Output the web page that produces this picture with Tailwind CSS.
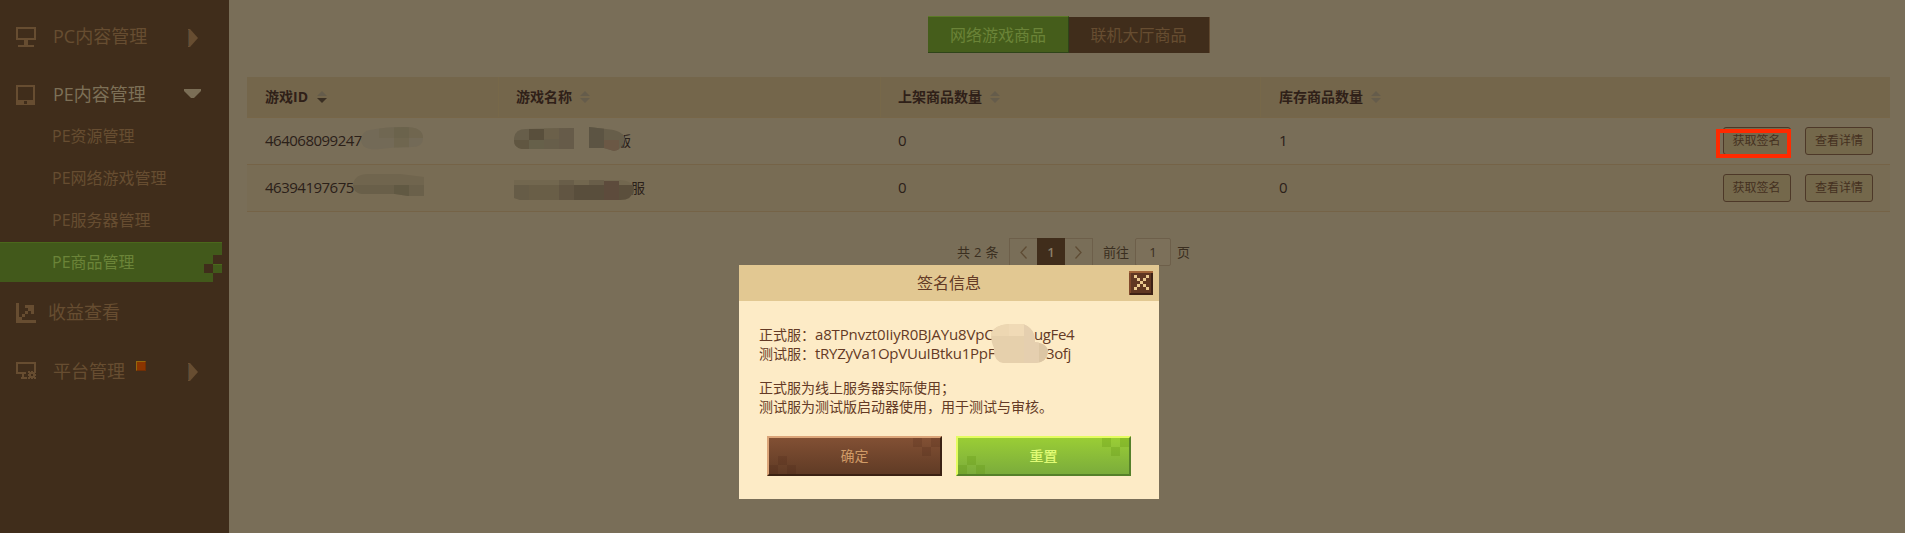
<!DOCTYPE html>
<html lang="zh">
<head>
<meta charset="utf-8">
<title>PE商品管理</title>
<script src="https://cdn.jsdelivr.net/npm/@tailwindcss/browser@4"></script>
</head>
<body class="relative flex h-[533px] w-[1905px] overflow-hidden bg-[#796e58] font-['Open_Sans','Noto_Sans_CJK_SC',sans-serif] text-sm text-[#2b2019]">
<aside class="flex h-full w-[229px] shrink-0 flex-col bg-[#402d1b] pt-[7px] text-lg text-[#674d31]">
  <div class="flex h-[58px] items-center pl-4">
    <svg class="mt-0.5 h-5 w-5 fill-current" viewBox="0 0 20 20" shape-rendering="crispEdges"><path fill-rule="evenodd" d="M0 0H20V13H12V18H18V20H2V18H8V13H0ZM2 2V11H18V2Z"/></svg>
    <span class="ml-[17px] w-[135px]">PC内容管理</span>
    <svg class="mt-1 h-[18px] w-[10px]" viewBox="0 0 10 18"><path d="M0 0H2L10 9L2 18H0Z" fill="#674d31"/><path d="M.5 1V17" stroke="#494235"/></svg>
  </div>
  <div class="flex h-[58px] items-center pl-4 text-[#7d7057]">
    <svg class="mt-px h-5 w-[19px] fill-[#674d31]" viewBox="0 0 19 20" shape-rendering="crispEdges"><path fill-rule="evenodd" d="M0 0H19V20H0ZM2 2V15H17V2ZM8 16V19H11V16Z"/></svg>
    <span class="ml-[18px] w-[131px]">PE内容管理</span>
    <svg class="h-[10px] w-[17px] fill-[#7b6e56]" viewBox="0 0 17 10"><path d="M0 0H17V2L10 9H7L0 2Z"/></svg>
  </div>
  <div class="-mt-2 flex flex-col text-base">
    <div class="flex h-[42px] items-center pl-[52px]">PE资源管理</div>
    <div class="flex h-[42px] items-center pl-[52px]">PE网络游戏管理</div>
    <div class="flex h-[42px] items-center pl-[52px]">PE服务器管理</div>
    <div class="my-px flex h-10 w-[222px] items-center justify-between border-t border-[#4a681b] bg-[#42591b] pl-[52px] text-[#6b8438]">
      <span class="-mt-px">PE商品管理</span>
      <svg class="h-[27px] w-[18px] self-end" viewBox="0 0 18 27" shape-rendering="crispEdges" fill="#402d1b"><path d="M9 0H18V9H9ZM0 9H9V18H0ZM9 18H18V27H9Z"/><path d="M9 9H18V10H9Z" fill="#4a681b"/></svg>
    </div>
  </div>
  <div class="flex h-[58px] items-center pl-4">
    <svg class="mt-[2px] h-5 w-5 fill-current" viewBox="0 0 20 20" shape-rendering="crispEdges"><path d="M0 0H3V14H6V17H20V20H0ZM9 2H18V11H15V8H12V11H9V14H6V11H9V8H12V5H9Z"/></svg>
    <span class="ml-3">收益查看</span>
  </div>
  <div class="flex h-[60px] items-center pl-4">
    <svg class="h-[18px] w-5 fill-current" viewBox="0 0 20 18" shape-rendering="crispEdges"><path fill-rule="evenodd" d="M0 0H20V9H18V2H2V10H10V12H8V15H11V17H5V15H6V12H0Z"/><path fill-rule="evenodd" d="M12 9H14V10H15V9H17V10H18V9H20V11H19V12H20V14H19V15H20V17H18V16H17V17H15V16H14V17H12V15H13V14H12V12H13V11H12ZM15 12V14H17V12Z"/></svg>
    <span class="-mt-px ml-[17px]">平台管理</span>
    <i class="-mt-[10px] ml-[11px] h-[10px] w-[10px] border border-b-[#702e05] border-l-[#95680c] border-r-[#702e05] border-t-[#95680c] bg-[#8a3400]"></i>
    <svg class="ml-[42px] mt-px h-[18px] w-[10px]" viewBox="0 0 10 18"><path d="M0 0H2L10 9L2 18H0Z" fill="#674d31"/><path d="M.5 1V17" stroke="#494235"/></svg>
  </div>
</aside>

<main class="flex grow flex-col pl-[18px] pr-[15px] pt-4">
  <div class="ml-[681px] flex h-[37px] text-base text-[#674d31]">
    <div class="flex w-[141px] items-center justify-center border-b border-r border-t border-b-[#2f4419] border-r-[#2f4419] border-t-[#5c7a26] bg-[#455d1b] text-[#6b8438]">网络游戏商品</div>
    <div class="mt-px flex w-[141px] items-center justify-center border-r border-[#614a31] bg-[#402d1b] pr-px">联机大厅商品</div>
  </div>
  <div class="mt-6 flex h-[41px] border-b border-[#776648] bg-[#74664b] font-bold text-[#2f2018]">
    <div class="flex w-[252px] items-center gap-[9px] border-r border-[#776849] pl-[18px]">游戏ID<svg class="h-3 w-[10px]" viewBox="0 0 10 12"><path d="M0 5L5 0L10 5Z" fill="#655c4b"/><path d="M0 7L5 12L10 7Z" fill="#3a2f23"/></svg></div>
    <div class="flex w-[382px] items-center gap-2 border-r border-[#776849] pl-[17px]">游戏名称<svg class="h-3 w-[10px] fill-[#655c4b]" viewBox="0 0 10 12"><path d="M0 5L5 0L10 5ZM0 7L5 12L10 7Z"/></svg></div>
    <div class="flex w-[380px] items-center gap-2 border-r border-[#776849] pl-[17px]">上架商品数量<svg class="h-3 w-[10px] fill-[#655c4b]" viewBox="0 0 10 12"><path d="M0 5L5 0L10 5ZM0 7L5 12L10 7Z"/></svg></div>
    <div class="flex items-center gap-2 pl-[18px]">库存商品数量<svg class="h-3 w-[10px] fill-[#655c4b]" viewBox="0 0 10 12"><path d="M0 5L5 0L10 5ZM0 7L5 12L10 7Z"/></svg></div>
  </div>
  <div class="relative flex h-[47px] items-center border-b border-[#756347] text-[15px]">
    <div class="w-[252px] pl-[18px] tracking-[-0.5px]">464068099247</div>
    <div class="w-[382px] pl-[118px] text-sm">版</div>
    <div class="w-[380px] pl-[17px]">0</div>
    <div class="grow pl-[18px]">1</div>
    <div class="mr-[17px] flex gap-[14px] text-xs text-[#44301f]">
      <div class="relative flex h-7 w-[68px] items-center justify-center rounded-[3px] border border-[#4d3828] bg-[#74684b] pr-px">获取签名<i class="absolute -left-2 top-px h-[29px] w-[75px] border-4 border-[#ff2a00]"></i></div>
      <div class="flex h-7 w-[68px] items-center justify-center rounded-[3px] border border-[#4d3828] bg-[#74684b]">查看详情</div>
    </div>
    <svg class="absolute left-[113px] top-[8px] h-6 w-[64px]" viewBox="360 126 64 24"><clipPath id="a"><path d="M361 140Q362 131 370 130Q385 127 405 127Q423 127 423 138Q423 147 412 147Q392 147 380 149Q362 151 361 140Z"/></clipPath><g clip-path="url(#a)"><path fill="#736a57" d="M360 126h64v24h-64z"/><path fill="#706752" d="M379 126h15v12h-15z"/><path fill="#6b634c" d="M394 126h15v12h-15z"/><path fill="#6f664f" d="M394 138h15v12h-15z"/><path fill="#70664f" d="M409 126h15v12h-15z"/></g></svg>
    <svg class="absolute left-[267px] top-[8px] h-[26px] w-[112px]" viewBox="514 126 112 26"><clipPath id="b"><path d="M514 138Q515 129 526 129L574 128V149L522 149Q514 148 514 140ZM574 130H589V147H574ZM589 127L606 129Q623 130 625 139Q622 150 614 151L604 148H589Z"/></clipPath><g clip-path="url(#b)"><path fill="#675e4a" d="M514 126h112v26H514z"/><path fill="#594f3c" d="M529 129h15v11h-15z"/><path fill="#66604a" d="M529 140h15v12h-15z"/><path fill="#605641" d="M514 140h15v12h-15z"/><path fill="#6b604a" d="M544 126h15v13h-15z"/><path fill="#665b49" d="M559 126h15v25h-15z"/><path fill="#796e58" d="M574 126h15v22h-15z"/><path fill="#5c5443" d="M589 126h15v25h-15z"/><path fill="#6b5845" d="M604 140h15v12h-15z"/></g></svg>
  </div>
  <div class="relative flex h-[47px] items-center border-b border-[#756347] bg-[#786c54] text-[15px]">
    <div class="w-[252px] pl-[18px] tracking-[-0.5px]">46394197675</div>
    <div class="w-[382px] pl-[132px] text-sm">服</div>
    <div class="w-[380px] pl-[17px]">0</div>
    <div class="grow pl-[18px]">0</div>
    <div class="mr-[17px] flex gap-[14px] text-xs text-[#44301f]">
      <div class="flex h-7 w-[68px] items-center justify-center rounded-[3px] border border-[#4d3828] bg-[#74684b] pr-px">获取签名</div>
      <div class="flex h-7 w-[68px] items-center justify-center rounded-[3px] border border-[#4d3828] bg-[#74684b]">查看详情</div>
    </div>
    <svg class="absolute left-[106px] top-[8px] h-6 w-[72px]" viewBox="353 173 72 24"><clipPath id="c"><path d="M353 184Q355 174 368 174H400L424 177V196H408L395 194H362Q353 193 353 184Z"/></clipPath><g clip-path="url(#c)"><path fill="#70654e" d="M353 173h72v24h-72z"/><path fill="#695f49" d="M353 185h41v12h-41z"/><path fill="#615943" d="M394 185h15v12h-15z"/><path fill="#6a604a" d="M409 185h15v12h-15z"/></g></svg>
    <svg class="absolute left-[267px] top-[14px] h-[22px] w-[120px]" viewBox="514 179 120 22"><clipPath id="d"><path d="M514 180H620Q634 181 634 190Q632 200 620 200H520L514 198Z"/></clipPath><g clip-path="url(#d)"><path fill="#72674f" d="M514 179h120v22H514z"/><path fill="#665c47" d="M514 185h15v16h-15z"/><path fill="#695e47" d="M529 185h30v16h-30z"/><path fill="#695e49" d="M559 180h15v5h-15zM589 180h15v5h-15z"/><path fill="#615542" d="M559 185h15v16h-15z"/><path fill="#594e3c" d="M574 185h30v16h-30z"/><path fill="#5d4b3c" d="M604 181h15v19h-15z"/><path fill="#5b4f3c" d="M619 185h15v16h-15z"/></g></svg>
  </div>
  <div class="ml-[710px] mt-[26px] flex h-7 items-center text-[13px] text-[#3a2e20]">
    <span class="w-[52px] tracking-[0.3px]">共 2 条</span>
    <div class="flex h-7 w-[84px] border border-[#6d5f4a]">
      <span class="flex w-[27px] items-center justify-center"><svg class="h-[13px] w-[7px] fill-none stroke-[#5f4c34] stroke-[1.3]" viewBox="0 0 7 13"><path d="M6.500 .5L1 6.500L6.500 12.500"/></svg></span>
      <span class="-my-px flex w-7 items-center justify-center bg-[#402d1b] font-semibold text-[#8a7e68]">1</span>
      <span class="flex w-[27px] items-center justify-center"><svg class="h-[13px] w-[7px] fill-none stroke-[#5f4c34] stroke-[1.3]" viewBox="0 0 7 13"><path d="M.5 .5L6 6.500L.5 12.500"/></svg></span>
    </div>
    <span class="ml-[10px]">前往</span>
    <span class="ml-[6px] flex h-7 w-9 items-center justify-center rounded-[2px] border border-[#6d5f4a] bg-[#7c705a]">1</span>
    <span class="ml-[6px]">页</span>
  </div>
</main>

<section class="absolute left-[739px] top-[265px] flex h-[234px] w-[420px] flex-col bg-[#fdebc6] text-[#643a25]">
  <header class="relative flex h-9 items-center justify-center bg-[#e2c892] text-base">签名信息
    <svg class="absolute right-[6px] top-[6px] h-6 w-6" viewBox="0 0 24 24" shape-rendering="crispEdges"><path fill="#603722" d="M0 0H24V24H0Z"/><path fill="#a06438" d="M0 0H24V2H0Z"/><path fill="#80492b" d="M0 2H2V24H0Z"/><path fill="#3d2115" d="M22 2H24V24H1V22H22Z"/><path fill="#e9c88f" d="M5 4h3v3h-3zM17 4h3v3h-3zM8 7h3v3h-3zM14 7h3v3h-3zM11 10h3v3h-3zM8 13h3v3h-3zM14 13h3v3h-3zM5 16h3v3h-3zM17 16h3v3h-3z"/></svg>
  </header>
  <div class="relative flex flex-col pl-5 pt-6 leading-[19px]">
    <div class="flex"><span class="w-14">正式服：</span><span class="w-[219px] text-[15px] tracking-[-0.15px]">a8TPnvzt0IiyR0BJAYu8VpC</span><span class="text-[15px] tracking-[-0.4px]">ugFe4</span></div>
    <div class="flex"><span class="w-14">测试服：</span><span class="w-[231px] text-[15px] tracking-[-0.25px]">tRYZyVa1OpVUuIBtku1PpF</span><span class="text-[15px] tracking-[-0.4px]">3ofj</span></div>
    <p class="mt-[15px]">正式服为线上服务器实际使用；</p>
    <p>测试服为测试版启动器使用，用于测试与审核。</p>
    <svg class="absolute left-[251px] top-[22px] h-10 w-[60px]" viewBox="990 323 60 40"><clipPath id="e"><path d="M991 334Q994 325 1009 324H1023Q1035 328 1035 342Q1048 344 1048 352Q1047 362 1036 363H1003Q993 361 994 348Q991 342 991 334Z"/></clipPath><g clip-path="url(#e)"><path fill="#e6d0ac" d="M990 323h60v40h-60z"/><path fill="#edd7b2" d="M990 323h34v13h-34z"/><path fill="#f0dab6" d="M1009 323h15v13h-15z"/><path fill="#e5cfaf" d="M1024 323h15v40h-15z"/><path fill="#dcc6a4" d="M1039 340h12v23h-12z"/></g></svg>
  </div>
  <div class="mt-5 flex gap-[14px] pl-7 text-sm">
    <div class="relative flex h-10 w-[175px] items-center justify-center border-2 border-b-[#3b2213] border-l-[#dba579] border-r-[#3b2213] border-t-[#dba579] bg-linear-to-b from-[#825034] to-[#603b25] text-[#d09b67]">确定
      <svg class="absolute inset-0 h-9 w-[171px]" viewBox="0 0 171 36" shape-rendering="crispEdges"><path fill="#41200f" fill-opacity=".17" d="M9 18h9v9h-9zM0 27h9v9h-9zM18 27h9v9h-9zM144 0h9v9h-9zM162 0h9v9h-9zM153 9h9v9h-9z"/></svg>
    </div>
    <div class="relative flex h-10 w-[175px] items-center justify-center border-2 border-b-[#55802a] border-l-[#e4fc60] border-r-[#55802a] border-t-[#e4fc60] bg-linear-to-b from-[#9acd35] to-[#7bac3b] font-medium text-[#e0fb75]">重置
      <svg class="absolute inset-0 h-9 w-[171px]" viewBox="0 0 171 36" shape-rendering="crispEdges"><path fill="#5b8f0c" fill-opacity=".25" d="M9 18h9v9h-9zM0 27h9v9h-9zM18 27h9v9h-9zM144 0h9v9h-9zM162 0h9v9h-9zM153 9h9v9h-9z"/></svg>
    </div>
  </div>
</section>
</body>
</html>
